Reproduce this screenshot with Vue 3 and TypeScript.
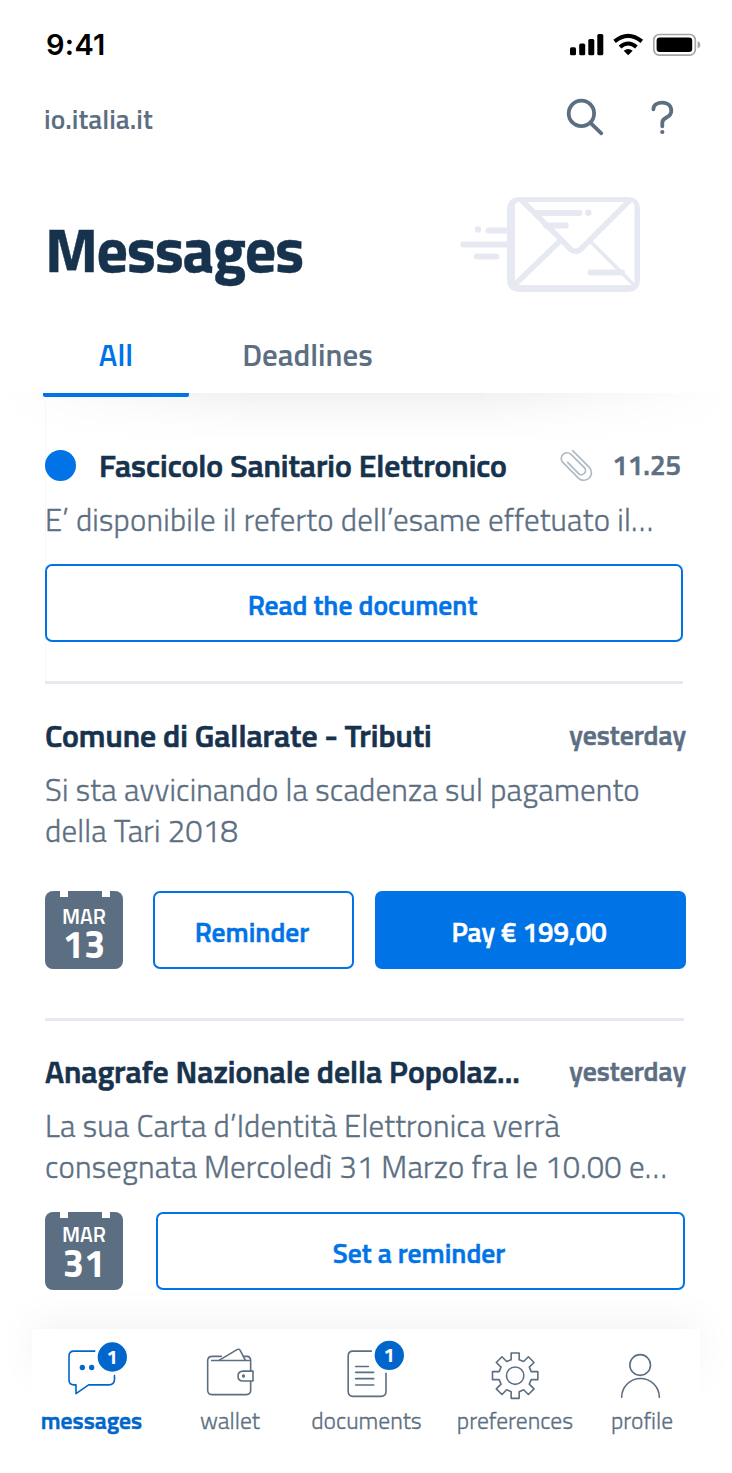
<script setup lang="ts">
interface Action { label: string; primary?: boolean }
interface Message {
  id: string
  title: string
  time: string
  unread?: boolean
  attachment?: boolean
  body: string[]
  day?: string
  actions: Action[]
}

const messages: Message[] = [
  {
    id: 'fascicolo',
    title: 'Fascicolo Sanitario Elettronico',
    time: '11.25',
    unread: true,
    attachment: true,
    body: ['E’ disponibile il referto dell’esame effetuato il…'],
    actions: [{ label: 'Read the document' }],
  },
  {
    id: 'gallarate',
    title: 'Comune di Gallarate - Tributi',
    time: 'yesterday',
    body: ['Si sta avvicinando la scadenza sul pagamento', 'della Tari 2018'],
    day: '13',
    actions: [{ label: 'Reminder' }, { label: 'Pay € 199,00', primary: true }],
  },
  {
    id: 'anagrafe',
    title: 'Anagrafe Nazionale della Popolaz...',
    time: 'yesterday',
    body: ['La sua Carta d’Identità Elettronica verrà', 'consegnata Mercoledì 31 Marzo fra le 10.00 e…'],
    day: '31',
    actions: [{ label: 'Set a reminder' }],
  },
]

/* Eight-toothed outline around (135.5, 197). */
const gear = (() => {
  const tooth = [[-12, -48], [-12, -68], [12, -68], [12, -48]]
  const points: string[] = []
  for (let i = 0; i < 8; i++) {
    const a = (i * Math.PI) / 4
    for (const [x, y] of tooth) {
      const px = 135.5 + x * Math.cos(a) - y * Math.sin(a)
      const py = 197 + x * Math.sin(a) + y * Math.cos(a)
      points.push(`${px.toFixed(1)} ${py.toFixed(1)}`)
    }
  }
  return `M${points.join('L')}Z`
})()
</script>

<template>
  <main class="screen">
    <header class="head">
      <div class="status">
        <span class="clock">9:41</span>
        <svg class="status-icons" width="132" height="24" viewBox="569 33 132 24">
          <rect x="570" y="47.3" width="6" height="8" rx="1.6" />
          <rect x="579.2" y="43.6" width="6" height="11.7" rx="1.6" />
          <rect x="588.3" y="39" width="6" height="16.3" rx="1.6" />
          <rect x="597.3" y="34" width="6" height="21.3" rx="1.6" />
          <path class="wave" d="M614.6 41.4Q628.2 30.4 641.8 41.4M620 47Q628.2 40 636.4 47" />
          <path d="M628.2 55.2L623.7 50.8Q628.2 47 632.7 50.8Z" />
          <rect class="cell" x="653.8" y="34.5" width="41.5" height="20.6" rx="5.5" />
          <rect x="656.6" y="37.4" width="35.6" height="14.6" rx="3.2" />
          <path class="nub" d="M697.6 41Q700.4 42 700.4 44.8T697.6 48.4Z" />
        </svg>
      </div>

      <div class="toolbar">
        <span class="site">io.italia.it</span>
        <svg class="tools" width="110" height="40" viewBox="566 97 110 40">
          <circle cx="581.4" cy="113.4" r="12.7" />
          <path d="M591 123.4L601.3 133.3" />
          <path d="M653.4 109.3C653.4 104.9 657.3 102.6 662.3 102.6C667.9 102.6 671.3 106.2 671.3 110.9C671.3 118.4 662.3 116.6 662.3 122.6V126.3" />
          <circle class="point" cx="662.3" cy="132" r="2.1" />
        </svg>
      </div>

      <div class="hero">
        <h1>Messages</h1>
        <svg class="envelope" width="184" height="98" viewBox="458 196 184 98">
          <path class="solid" fill-rule="evenodd" d="M520 197H627Q640 197 640 210V279Q640 292 627 292H520Q507 292 507 279V210Q507 197 520 197ZM519 202Q515 202 515 206V281Q515 285 519 285H630.5Q634.5 285 634.5 281V206Q634.5 202 630.5 202Z" />
          <path class="flap" d="M520.5 199L567.5 246Q575.7 256.5 583.9 246L631 199M515.5 284L560 241" />
          <path class="thin" d="M590.5 241.5L634 285" />
          <path class="dash" d="M536 213H579.4M546 225.4H565.7M590.6 272.4H622M488.5 230.5H509M463.3 244.4H509M476.8 256.4H496.4" />
          <circle class="solid" cx="588.3" cy="212.8" r="3.2" />
          <circle class="solid" cx="478" cy="229.5" r="3.2" />
        </svg>
      </div>

      <nav class="tabs">
        <a class="tab active">All</a>
        <a class="tab">Deadlines</a>
      </nav>
    </header>

    <section class="list">
      <article v-for="m in messages" :key="m.id" class="message" :class="m.id">
        <div class="row">
          <i v-if="m.unread" class="dot" />
          <h2>{{ m.title }}</h2>
          <svg v-if="m.attachment" class="clip" width="34" height="34" viewBox="60 57 102 102">
            <path d="M98 62L148 112A23 23 0 0 1 116 145L69 98A17 17 0 0 1 93 73L133 113A12 12 0 0 1 115 130L83 97" />
          </svg>
          <time>{{ m.time }}</time>
        </div>
        <div class="body">
          <p v-for="line in m.body" :key="line">{{ line }}</p>
        </div>
        <div class="actions">
          <div v-if="m.day" class="calendar">
            <span class="month">MAR</span>
            <span class="day">{{ m.day }}</span>
          </div>
          <button v-for="a in m.actions" :key="a.label" :class="{ primary: a.primary }">{{ a.label }}</button>
        </div>
      </article>
    </section>

    <footer class="bottom">
      <a class="item current">
        <svg width="72" height="64" viewBox="78 78 216 192">
          <path d="M194 123.5H132Q117 123.5 117 139V209Q117 224.5 132 224.5H138V251L176 224.5H236Q253.5 224.5 253.5 208V197" />
          <circle class="fill" cx="157" cy="172.5" r="8" />
          <circle class="fill" cx="185" cy="172.5" r="8" />
          <circle class="fill" cx="247" cy="141" r="44" />
          <text x="246" y="161">1</text>
        </svg>
        <span>messages</span>
      </a>
      <a class="item">
        <svg width="72" height="64" viewBox="492 78 216 192">
          <path d="M574 139H547Q533 139 533 152V241Q533 254 546 254H649Q662 254 662 241V214M662 183V152Q662 139 650 139H642M545 151.5H662" />
          <path d="M567 151L621 119Q628 115 631 122L646 151M669 183.5H640Q624 184 624 198.5Q624 213 640 213H669Z" />
          <circle class="fill" cx="640.5" cy="198" r="5" />
        </svg>
        <span>wallet</span>
      </a>
      <a class="item">
        <svg width="72" height="64" viewBox="123 78 216 192">
          <path d="M244 123.5H189Q174.5 123.5 174.5 139V244Q174.5 259 189 259H273Q288 259 288 244V190" />
          <path class="heavy" d="M197 169.5H235M197 187H251M197 206H251M197 225H251" />
          <circle class="badge" cx="298" cy="136" r="44" />
          <text x="297" y="156">1</text>
        </svg>
        <span>documents</span>
      </a>
      <a class="item">
        <svg width="72" height="64" viewBox="27 78 216 192">
          <path :d="gear" />
          <circle cx="135.5" cy="197" r="26" />
        </svg>
        <span>preferences</span>
      </a>
      <a class="item">
        <svg width="72" height="64" viewBox="408 78 216 192">
          <circle cx="510.5" cy="165" r="31" />
          <path d="M455 262A56.5 56.5 0 0 1 568 262" />
        </svg>
        <span>profile</span>
      </a>
    </footer>
  </main>
</template>

<style>
body { margin: 0; background: #fff; }
</style>

<style scoped>
.screen {
  width: 732px;
  height: 1473px;
  overflow: hidden;
  background: #fff;
  color: #5c6f82;
  font-family: "Titillium Web", Roboto, "Liberation Sans", sans-serif;
  white-space: nowrap;
}
h1, h2, p { margin: 0; }
svg { display: block; flex: none; overflow: visible; }

.head { position: relative; z-index: 1; height: 393px; background: #fff; box-sizing: border-box; padding-top: 33px; }
.status { display: flex; justify-content: space-between; height: 64px; padding: 0 31px 0 46px; }
.clock { font: 600 29px/24px Inter, sans-serif; letter-spacing: 0.3px; color: #000; }
.status-icons { fill: #000; }
.wave { fill: none; stroke: #000; stroke-width: 4; }
.cell { fill: none; stroke: #a6a6a6; stroke-width: 1.7; }
.nub { fill: #a6a6a6; }

.toolbar { display: flex; justify-content: space-between; height: 99px; padding: 0 56px 0 44px; }
.site { font-size: 27.5px; font-weight: 600; line-height: 44px; }
.tools { fill: none; stroke: #5c6f82; stroke-width: 3.8; stroke-linecap: round; }
.tools .point { fill: #5c6f82; stroke: none; }

.hero { display: flex; justify-content: space-between; height: 130px; padding: 0 90px 0 45px; }
h1 { color: #17324d; font-size: 62px; font-weight: 700; line-height: 106px; letter-spacing: -1.35px; -webkit-text-stroke: 0.4px; }
.envelope { fill: none; stroke: #e6e9f2; stroke-linecap: round; }
.solid { fill: #e6e9f2; stroke: none; }
.flap { stroke-width: 5.5; stroke-linecap: butt; }
.thin { stroke-width: 3.6; stroke-linecap: butt; }
.dash { stroke-width: 6; }

.tabs { display: flex; height: 71px; padding-left: 43px; }
.tab { box-sizing: border-box; width: 146px; height: 71px; text-align: center; font-size: 31px; font-weight: 600; line-height: 57px; }
.tab + .tab { width: 237px; }
.tab.active { color: #0073e6; border-bottom: 4px solid #0073e6; border-radius: 2px; }

.list { position: relative; height: 936px; }
.list::before {
  content: "";
  position: absolute;
  inset: 0 0 auto;
  height: 50px;
  background: linear-gradient(#f0f0f0, #f7f7f7 28%, #fcfcfc 62%, #fff);
  mask-image: linear-gradient(90deg, transparent, #000 35%, #000 65%, transparent);
}
.message { position: relative; box-sizing: border-box; width: 641px; margin-left: 45px; }
.fascicolo { height: 291px; width: 638px; padding-top: 53px; border-bottom: 3px solid #e6e9f2; }
.fascicolo::before { content: ""; position: absolute; left: 0; top: 9px; bottom: 0; width: 1px; background: #f7f7f7; }
.gallarate { height: 337px; padding-top: 32px; }
.gallarate::after { content: ""; position: absolute; left: 0; bottom: 0; width: 639px; height: 3px; background: #e6e9f2; }
.anagrafe { z-index: 1; padding-top: 31px; }

.row { position: relative; display: flex; align-items: center; height: 40px; }
.dot { flex: none; width: 31px; height: 31px; margin: -1px 23px 0 0; border-radius: 50%; background: #0073e6; }
h2 { flex: 1; color: #17324d; font-size: 31.8px; font-weight: 600; line-height: 38px; padding-bottom: 2px; -webkit-text-stroke: 0.7px; letter-spacing: -0.03px; }
.clip { margin: 0 18px 0 0; fill: none; stroke: #aeb8c2; stroke-width: 4.8; stroke-linecap: round; }
time { font-size: 27.7px; font-weight: 600; line-height: 36px; padding-bottom: 3px; -webkit-text-stroke: 0.6px; }
.fascicolo time { margin-right: 2px; }
.body { height: 41px; font-size: 31px; font-weight: 300; line-height: 41px; padding-top: 13px; -webkit-text-stroke: 0.35px; letter-spacing: 0.2px; }
.gallarate .body, .anagrafe .body { height: 82px; }

.actions { display: flex; height: 78px; margin-top: 24px; }
.gallarate .actions { margin-top: 40px; }
.anagrafe .actions { margin-top: 25px; width: 640px; }
button {
  position: relative;
  box-sizing: border-box;
  flex: 1;
  padding: 3px 3px 0 0;
  border: 2px solid #0073e6;
  border-radius: 7px;
  background: #fff;
  color: #0073e6;
  font: inherit;
  font-size: 27.6px;
  font-weight: 600;
  -webkit-text-stroke: 0.5px;
}
button.primary { flex: none; width: 311px; margin-left: 21px; background: #0073e6; color: #fff; }
.calendar {
  position: relative;
  display: flex;
  flex-direction: column;
  align-items: center;
  box-sizing: border-box;
  width: 78px;
  height: 78px;
  margin-right: 30px;
  padding-top: 13px;
  border-radius: 8px;
  background: #5c6f82;
  color: #fff;
}
.anagrafe .calendar { margin-right: 33px; padding-top: 10px; }
.calendar::before, .calendar::after { content: ""; position: absolute; top: 0; width: 8px; height: 6px; background: #fff; }
.calendar::before { left: 15px; }
.calendar::after { right: 13px; }
.month { font-size: 21.3px; font-weight: 600; line-height: 24px; }
.day { font-size: 38px; font-weight: 700; line-height: 32px; }
.anagrafe .day { line-height: 35px; }

.bottom {
  position: relative;
  z-index: 0;
  display: grid;
  grid-template-columns: 119px 158px 115px 182px 72px;
  box-sizing: border-box;
  width: 668px;
  height: 144px;
  margin-left: 32px;
  padding-top: 7px;
}
.bottom::before {
  content: "";
  position: absolute;
  z-index: -1;
  inset: 0 0 auto;
  height: 50px;
  box-shadow: 0 -8px 42px rgba(0, 0, 0, 0.05);
}
.bottom::after { content: ""; position: absolute; z-index: -1; inset: 0; background: #fff; }
.item { display: flex; flex-direction: column; align-items: center; font-size: 23.6px; font-weight: 300; line-height: 40px; -webkit-text-stroke: 0.3px; }
.item svg { fill: none; stroke: #5c6f82; stroke-width: 4.8; stroke-linecap: round; stroke-linejoin: round; }
.item .fill { fill: #5c6f82; stroke: none; }
.item .badge { fill: #0066cc; stroke: none; }
.item .heavy { stroke-width: 5; }
.item text { fill: #fff; stroke: none; font-size: 60px; font-weight: 700; text-anchor: middle; -webkit-text-stroke: 0; }
.item.current { color: #0066cc; font-weight: 600; -webkit-text-stroke: 0.5px; }
.item.current svg { stroke: #0066cc; }
.item.current .fill { fill: #0066cc; }
</style>
